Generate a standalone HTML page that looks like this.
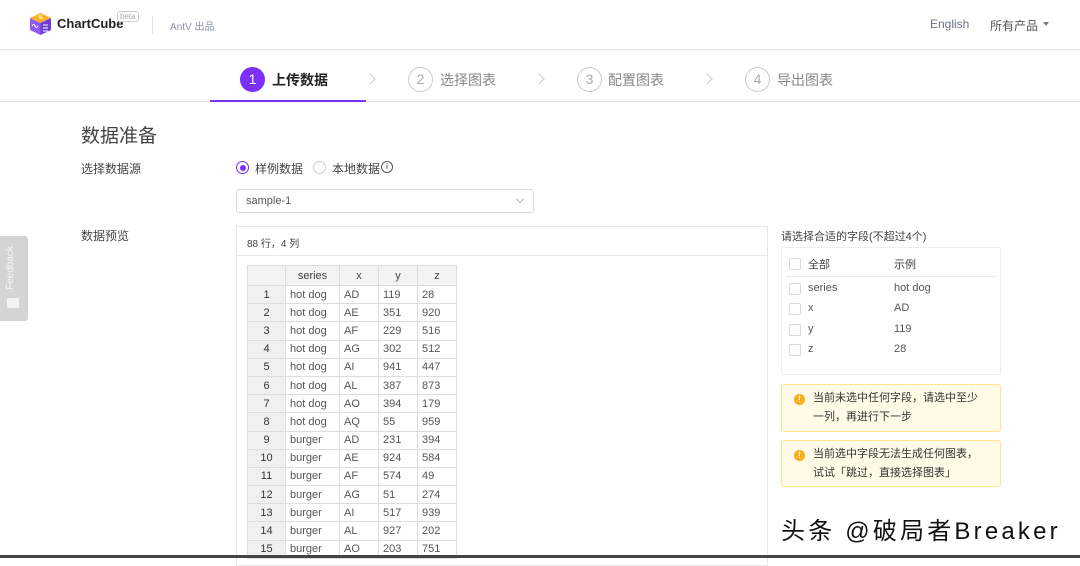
<!DOCTYPE html>
<html><head><meta charset="utf-8"><style>
*{margin:0;padding:0;box-sizing:border-box}
body{width:1080px;height:558px;overflow:hidden;background:#fff;font-family:"Liberation Sans","Noto Sans CJK SC",sans-serif;color:#333;position:relative}
.a{position:absolute;white-space:nowrap}
.hdr{left:0;top:0;width:1080px;height:50px;border-bottom:1px solid #e8e8e8;box-shadow:0 1px 3px rgba(0,0,0,.06)}
.steps{left:0;top:52px;width:1080px;height:50px;border-bottom:1px solid #e3e3e3}
.circ{width:25px;height:25px;border-radius:50%;border:1px solid #ccc;color:#aaa;font-size:14px;text-align:center;line-height:23px}
.stx{font-size:14px;color:#888}
.chev{width:8px;height:8px;border-top:1px solid #ccc;border-right:1px solid #ccc;transform:rotate(45deg)}
.lbl{font-size:12px;color:#444}
table{border-collapse:collapse;font-size:11px}
td{border:1px solid #ddd;height:18.2px;padding:0 4px;color:#555;line-height:16px}
td.i{background:#f0f0f0;text-align:center;color:#333;width:38px;font-weight:normal}
tr.h td{background:#f3f3f3;text-align:center;height:20px;color:#444}
.cb{width:12px;height:12px;border:1px solid #d9d9d9;border-radius:2px;background:#fff}
.warn{background:#fffbe6;border:1px solid #ffe58f;border-radius:3px;font-size:11px;color:#333;line-height:19px;padding:4px 20px 4px 31px}
.wi{position:absolute;left:12px;top:9px;width:11px;height:11px;border-radius:50%;background:#faad14;color:#fff;font-size:9px;text-align:center;line-height:11px;font-weight:bold}
</style></head><body>
<div class="a hdr"></div>
<svg class="a" style="left:29px;top:12px" width="23" height="24" viewBox="0 0 23 24">
<polygon points="11.5,1 22,6 11.5,11 1,6" fill="#ffb020"/>
<polygon points="1,6 11.5,11 11.5,23 1,18" fill="#8d5cf6"/>
<polygon points="22,6 11.5,11 11.5,23 22,18" fill="#6d3de0"/>
<path d="M3 14 q2-3 3 0 t3 0" stroke="#fff" fill="none" stroke-width="1"/>
<path d="M14 13h5M14 16h5M14 19h5M9 4h4M10 6h4" stroke="#fff" stroke-width="1"/>
</svg>
<div class="a" style="left:57px;top:16px;font-size:13px;font-weight:bold;color:#222">ChartCube</div>
<div class="a" style="left:117px;top:11px;font-size:8px;color:#aaa;border:1px solid #ccc;border-radius:3px;padding:0 2px;line-height:9px;background:#fff">beta</div>
<div class="a" style="left:152px;top:16px;width:1px;height:18px;background:#e5e5e5"></div>
<div class="a" style="left:170px;top:18px;font-size:10px;color:#8a93a8">AntV 出品</div>
<div class="a" style="left:930px;top:17px;font-size:12px;color:#6b7385">English</div>
<div class="a" style="left:990px;top:17px;font-size:12px;color:#555">所有产品</div>
<div class="a" style="left:1043px;top:22px;border:3.5px solid transparent;border-top:4px solid #777"></div>

<div class="a steps"></div>
<div class="a" style="left:210px;top:100px;width:156px;height:2px;background:#7b2ff7"></div>
<div class="a circ" style="left:240px;top:67px;background:#7b2ff7;border-color:#7b2ff7;color:#fff">1</div>
<div class="a stx" style="left:272px;top:70px;color:#222;font-weight:bold">上传数据</div>
<div class="a chev" style="left:366px;top:75px"></div>
<div class="a circ" style="left:408px;top:67px">2</div>
<div class="a stx" style="left:440px;top:70px">选择图表</div>
<div class="a chev" style="left:535px;top:75px"></div>
<div class="a circ" style="left:577px;top:67px">3</div>
<div class="a stx" style="left:608px;top:70px">配置图表</div>
<div class="a chev" style="left:703px;top:75px"></div>
<div class="a circ" style="left:745px;top:67px">4</div>
<div class="a stx" style="left:777px;top:70px">导出图表</div>

<div class="a" style="left:81px;top:121px;font-size:19px;color:#444">数据准备</div>
<div class="a lbl" style="left:81px;top:160px">选择数据源</div>
<div class="a" style="left:236px;top:161px;width:13px;height:13px;border:1px solid #7b2ff7;border-radius:50%"><div style="margin:2.5px;width:6px;height:6px;border-radius:50%;background:#7b2ff7"></div></div>
<div class="a lbl" style="left:255px;top:160px">样例数据</div>
<div class="a" style="left:313px;top:161px;width:13px;height:13px;border:1px solid #ccc;border-radius:50%"></div>
<div class="a lbl" style="left:332px;top:160px">本地数据</div>
<div class="a" style="left:381px;top:161px;width:12px;height:12px;border:1px solid #555;border-radius:50%;font-size:8px;text-align:center;line-height:10px">i</div>
<div class="a" style="left:236px;top:189px;width:298px;height:24px;border:1px solid #d9d9d9;border-radius:3px"></div>
<div class="a" style="left:246px;top:195px;font-size:11px;color:#555">sample-1</div>
<div class="a" style="left:517px;top:196px;width:6px;height:6px;border-right:1px solid #bbb;border-bottom:1px solid #bbb;transform:rotate(45deg)"></div>

<div class="a lbl" style="left:81px;top:227px">数据预览</div>
<div class="a" style="left:236px;top:226px;width:532px;height:340px;border:1px solid #e8e8e8"></div>
<div class="a" style="left:236px;top:255px;width:532px;height:1px;background:#e8e8e8"></div>
<div class="a" style="left:247px;top:235px;font-size:10px;color:#444">88 行，4 列</div>
<table class="a" style="left:247px;top:265px">
<tr class="h"><td class="i"></td><td style="width:54px">series</td><td style="width:39px">x</td><td style="width:39px">y</td><td style="width:39px">z</td></tr>
<tr><td class="i">1</td><td>hot dog</td><td>AD</td><td>119</td><td>28</td></tr>
<tr><td class="i">2</td><td>hot dog</td><td>AE</td><td>351</td><td>920</td></tr>
<tr><td class="i">3</td><td>hot dog</td><td>AF</td><td>229</td><td>516</td></tr>
<tr><td class="i">4</td><td>hot dog</td><td>AG</td><td>302</td><td>512</td></tr>
<tr><td class="i">5</td><td>hot dog</td><td>AI</td><td>941</td><td>447</td></tr>
<tr><td class="i">6</td><td>hot dog</td><td>AL</td><td>387</td><td>873</td></tr>
<tr><td class="i">7</td><td>hot dog</td><td>AO</td><td>394</td><td>179</td></tr>
<tr><td class="i">8</td><td>hot dog</td><td>AQ</td><td>55</td><td>959</td></tr>
<tr><td class="i">9</td><td>burger</td><td>AD</td><td>231</td><td>394</td></tr>
<tr><td class="i">10</td><td>burger</td><td>AE</td><td>924</td><td>584</td></tr>
<tr><td class="i">11</td><td>burger</td><td>AF</td><td>574</td><td>49</td></tr>
<tr><td class="i">12</td><td>burger</td><td>AG</td><td>51</td><td>274</td></tr>
<tr><td class="i">13</td><td>burger</td><td>AI</td><td>517</td><td>939</td></tr>
<tr><td class="i">14</td><td>burger</td><td>AL</td><td>927</td><td>202</td></tr>
<tr><td class="i">15</td><td>burger</td><td>AO</td><td>203</td><td>751</td></tr>
</table>

<div class="a" style="left:781px;top:228px;font-size:11px;color:#444">请选择合适的字段(不超过4个)</div>
<div class="a" style="left:781px;top:247px;width:220px;height:128px;border:1px solid #eee;border-radius:2px"></div>
<div class="a" style="left:786px;top:276px;width:210px;height:1px;background:#e8e8e8"></div>
<div class="a cb" style="left:789px;top:258px"></div><div class="a" style="left:808px;top:256px;font-size:11px;color:#444">全部</div><div class="a" style="left:894px;top:256px;font-size:11px;color:#444">示例</div>
<div class="a cb" style="left:789px;top:283px"></div><div class="a" style="left:808px;top:282px;font-size:11px;color:#555">series</div><div class="a" style="left:894px;top:282px;font-size:11px;color:#555">hot dog</div>
<div class="a cb" style="left:789px;top:303px"></div><div class="a" style="left:808px;top:302px;font-size:11px;color:#555">x</div><div class="a" style="left:894px;top:302px;font-size:11px;color:#555">AD</div>
<div class="a cb" style="left:789px;top:324px"></div><div class="a" style="left:808px;top:323px;font-size:11px;color:#555">y</div><div class="a" style="left:894px;top:323px;font-size:11px;color:#555">119</div>
<div class="a cb" style="left:789px;top:344px"></div><div class="a" style="left:808px;top:343px;font-size:11px;color:#555">z</div><div class="a" style="left:894px;top:343px;font-size:11px;color:#555">28</div>

<div class="a warn" style="left:781px;top:384px;width:220px;height:48px;white-space:normal"><span class="wi">!</span>当前未选中任何字段，请选中至少一列，再进行下一步</div>
<div class="a warn" style="left:781px;top:440px;width:220px;height:47px;white-space:normal"><span class="wi">!</span>当前选中字段无法生成任何图表，试试「跳过，直接选择图表」</div>

<div class="a" style="left:0;top:236px;width:28px;height:85px;background:#d4d4d4;border-radius:0 3px 3px 0"></div>
<div class="a" style="left:5px;top:290px;font-size:10px;color:#f5f5f5;transform:rotate(-90deg);transform-origin:0 0">Feedback</div>
<div class="a" style="left:7px;top:298px;width:12px;height:10px;background:#f2f2f2;border-radius:1px"></div>

<div class="a" style="left:781px;top:511px;font-size:24px;letter-spacing:3.2px;color:#111;text-shadow:1px 1px 0 #fff,-1px -1px 0 #fff,1px -1px 0 #fff,-1px 1px 0 #fff">头条 @破局者Breaker</div>
<div class="a" style="left:0;top:555px;width:1080px;height:3px;background:#444"></div>
</body></html>
